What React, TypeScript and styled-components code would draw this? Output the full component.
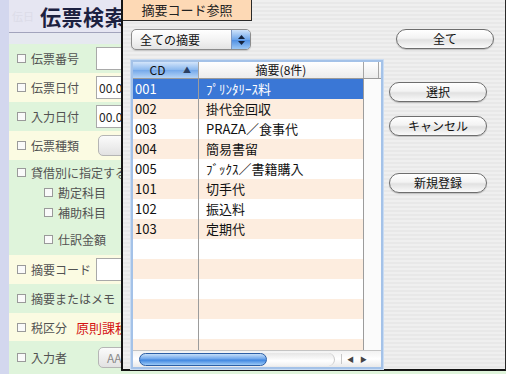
import React, { FC } from 'react';
import styled, { createGlobalStyle } from 'styled-components';

const jp = `"Noto Sans CJK JP", "Noto Sans", sans-serif`;

const GlobalStyle = createGlobalStyle`
  html, body {
    margin: 0;
    padding: 0;
    background: #e8e8f2;
  }
  * {
    box-sizing: border-box;
  }
`;

const Desk = styled.div`
  position: relative;
  width: 506px;
  height: 374px;
  overflow: hidden;
  font-family: ${jp};
  background: #e8e8f2;
`;

/* ---------- search window behind ---------- */

const SearchWindow = styled.div`
  display: flex;
  flex-direction: column;
  height: 100%;
  border-left: 9px solid #d3d7ee;
`;

const TitleBar = styled.div`
  height: 33px;
  display: flex;
  align-items: center;
  padding-left: 3px;
  background: #e6e6f2;
  border-bottom: 1px solid #a2a4bc;
`;

const Ghost = styled.span`
  font-size: 11px;
  color: #dcdce8;
  margin-right: 6px;
  align-self: flex-start;
  margin-top: 8px;
`;

const Title = styled.h1`
  margin: 0;
  font-size: 21px;
  font-weight: 700;
  color: #1c2140;
  letter-spacing: 0.5px;
  white-space: nowrap;
`;

const Gap = styled.div`
  height: 11px;
  background: #e6e9f0;
`;

const Row = styled.div<{ $tone: 'green' | 'yellow'; $h: number }>`
  height: ${(p) => p.$h}px;
  display: flex;
  align-items: center;
  padding-left: 8px;
  background: ${(p) => (p.$tone === 'green' ? '#dff4db' : '#fbfbe2')};
  white-space: nowrap;
`;

const StackRow = styled(Row)`
  flex-direction: column;
  align-items: flex-start;
  padding-top: 2px;
`;

const Line = styled.div<{ $indent?: number; $top?: number }>`
  height: 20px;
  display: flex;
  align-items: center;
  padding-left: ${(p) => p.$indent ?? 0}px;
  margin-top: ${(p) => p.$top ?? 0}px;
`;

const Box = styled.span`
  width: 9px;
  height: 9px;
  border: 1px solid #9a9a9a;
  background: #fafafa;
  margin-right: 5px;
  flex: none;
`;

const Label = styled.span<{ $w?: number }>`
  font-size: 12px;
  color: #525252;
  width: ${(p) => (p.$w ? `${p.$w}px` : 'auto')};
`;

const Field = styled.div`
  width: 60px;
  height: 23px;
  background: #fff;
  border: 1px solid #a9a9a9;
  font-size: 12px;
  color: #222;
  padding-left: 2px;
  line-height: 21px;
`;

const GrayButton = styled.div`
  margin-left: 2px;
  width: 60px;
  height: 21px;
  border: 1px solid #b5b5b5;
  border-radius: 5px;
  background: linear-gradient(#fbfbfb, #e2e2e2);
  font-size: 12px;
  color: #8a8a8a;
  padding-left: 8px;
  line-height: 19px;
`;

const RedText = styled.span`
  font-size: 13px;
  color: #d41414;
`;

/* ---------- dialog ---------- */

const Dialog = styled.div`
  position: absolute;
  left: 121px;
  top: 0;
  width: 385px;
  height: 371px;
  border-left: 2px solid #141414;
  border-right: 1px solid #2a2a2a;
  border-bottom: 2px solid #141414;
  background: repeating-linear-gradient(#efefef 0 2px, #e8e8e8 2px 4px);
  display: flex;
  flex-direction: column;
`;

const Tab = styled.div`
  width: 129px;
  height: 21px;
  background: #fdd9b5;
  border-right: 1px solid #2a2a2a;
  border-bottom: 1px solid #2a2a2a;
  font-size: 13px;
  color: #222;
  text-align: center;
  line-height: 20px;
`;

const Controls = styled.div`
  display: flex;
  justify-content: space-between;
  align-items: flex-start;
  margin-top: 8px;
  padding: 0 11px 0 8px;
`;

const Popup = styled.div`
  width: 120px;
  height: 21px;
  border: 1px solid #8c8c8c;
  border-radius: 5px;
  background: linear-gradient(#ffffff, #f1f1f1 60%, #e4e4e4);
  display: flex;
  align-items: center;
  overflow: hidden;
  box-shadow: 0 1px 1px rgba(0, 0, 0, 0.15);
`;

const PopupText = styled.span`
  flex: 1;
  font-size: 12px;
  color: #111;
  padding-left: 8px;
`;

const Stepper = styled.span`
  width: 19px;
  height: 100%;
  border-left: 1px solid #7d98c4;
  background: linear-gradient(#cfe3fa, #6fa6ea 50%, #4b8ce2 51%, #9cc8f5);
  display: flex;
  flex-direction: column;
  align-items: center;
  justify-content: center;
  gap: 2px;
`;

const Pill = styled.button<{ $w?: number }>`
  width: ${(p) => p.$w ?? 98}px;
  height: 20px;
  padding: 0;
  border: 1px solid #6e6e6e;
  border-radius: 10px;
  background: linear-gradient(#ffffff, #f3f3f3 45%, #e1e1e1 55%, #fafafa);
  font-family: ${jp};
  font-size: 12px;
  color: #111;
  line-height: 18px;
  box-shadow: 0 1px 1px rgba(0, 0, 0, 0.2);
`;

const Rule = styled.div`
  height: 1px;
  margin: 5px 7px 0 5px;
  background: #a3a3a3;
`;

const Body = styled.div`
  display: flex;
  margin-top: 5px;
  padding-left: 8px;
`;

const ListFrame = styled.div`
  width: 252px;
  height: 309px;
  border: 2px solid #a4c2e8;
  outline: 1px solid #c9dbf1;
  display: flex;
  flex-direction: column;
  background: #fff;
  overflow: hidden;
`;

const HeadRow = styled.div`
  display: flex;
  height: 17px;
  border-bottom: 1px solid #9a9a9a;
  background: linear-gradient(#ffffff, #ececec);
  flex: none;
`;

const HeadCell = styled.div<{ $w: number; $active?: boolean }>`
  width: ${(p) => p.$w}px;
  flex: none;
  font-size: 12px;
  line-height: 16px;
  color: #111;
  text-align: center;
  padding-right: ${(p) => (p.$active ? 16 : 0)}px;
  border-right: 1px solid #a5a5a5;
  position: relative;
  background: ${(p) => (p.$active ? 'linear-gradient(#d2e4fa, #8bb8ee 50%, #74a8ea 51%, #b5d4f6)' : 'transparent')};
`;

const SortMark = styled.span`
  position: absolute;
  right: 7px;
  top: 0;
  font-size: 8px;
  color: #2a3f62;
`;

const Rows = styled.div`
  flex: 1;
  overflow: hidden;
`;

const ListRow = styled.div<{ $odd: boolean; $selected?: boolean }>`
  display: flex;
  height: 20px;
  background: ${(p) => (p.$selected ? '#3a77d6' : p.$odd ? '#fdeddf' : '#ffffff')};
  color: ${(p) => (p.$selected ? '#fff' : '#111')};
`;

const Cell = styled.div<{ $w: number; $pad: number }>`
  width: ${(p) => p.$w}px;
  flex: none;
  padding-left: ${(p) => p.$pad}px;
  font-size: 13px;
  line-height: 20px;
  border-right: 1px solid #9c9c9c;
  white-space: nowrap;
  overflow: hidden;
`;

const FillerCell = styled.div`
  flex: 1;
  background: #fbfbfb;
`;

const HScroll = styled.div`
  height: 17px;
  flex: none;
  display: flex;
  align-items: center;
  border-top: 1px solid #c4c4c4;
  background: linear-gradient(#f2f2f2, #ffffff 50%, #e9e9e9);
  padding-left: 6px;
`;

const Track = styled.div`
  width: 196px;
  height: 13px;
  border-radius: 7px;
  background: linear-gradient(#e6e6e6, #ffffff 60%, #f0f0f0);
  border-right: 1px solid #c8c8c8;
`;

const Thumb = styled.div`
  width: 128px;
  height: 13px;
  border-radius: 7px;
  border: 1px solid #2b5ea5;
  background: linear-gradient(#c4def9, #6da5eb 45%, #3f86e0 55%, #9ccaf7);
`;

const Arrows = styled.div`
  display: flex;
  gap: 6px;
  margin-left: 6px;
  font-size: 7px;
  color: #444;
  border-left: 1px solid #c8c8c8;
  padding-left: 5px;
`;

const SideButtons = styled.div`
  display: flex;
  flex-direction: column;
  margin-left: 6px;
  padding-top: 22px;
  gap: 14px;
`;

const Spacer = styled.div`
  height: 9px;
`;

const items: [string, string][] = [
  ['001', 'ﾌﾟﾘﾝﾀﾘｰｽ料'],
  ['002', '掛代金回収'],
  ['003', 'PRAZA／食事代'],
  ['004', '簡易書留'],
  ['005', 'ﾌﾞｯｸｽ／書籍購入'],
  ['101', '切手代'],
  ['102', '振込料'],
  ['103', '定期代'],
];

const rows = [...items, ...Array.from({ length: 6 }, () => ['', ''] as [string, string])];

const Arrow: FC<{ up?: boolean }> = ({ up }) => (
  <svg width="7" height="4" viewBox="0 0 7 4">
    <path d={up ? 'M0 4 L3.5 0 L7 4 Z' : 'M0 0 L3.5 4 L7 0 Z'} fill="#15233c" />
  </svg>
);

const App: FC = () => (
  <Desk>
    <GlobalStyle />
    <SearchWindow>
      <TitleBar>
        <Ghost>伝日</Ghost>
        <Title>伝票検索</Title>
      </TitleBar>
      <Gap />
      <Row $tone="green" $h={29}>
        <Box />
        <Label $w={65}>伝票番号</Label>
        <Field />
      </Row>
      <Row $tone="yellow" $h={29}>
        <Box />
        <Label $w={65}>伝票日付</Label>
        <Field>00.0</Field>
      </Row>
      <Row $tone="green" $h={29}>
        <Box />
        <Label $w={65}>入力日付</Label>
        <Field>00.0</Field>
      </Row>
      <Row $tone="yellow" $h={29}>
        <Box />
        <Label $w={65}>伝票種類</Label>
        <GrayButton />
      </Row>
      <StackRow $tone="green" $h={95}>
        <Line>
          <Box />
          <Label>貸借別に指定する</Label>
        </Line>
        <Line $indent={27}>
          <Box />
          <Label>勘定科目</Label>
        </Line>
        <Line $indent={27}>
          <Box />
          <Label>補助科目</Label>
        </Line>
        <Line $indent={27} $top={7}>
          <Box />
          <Label>仕訳金額</Label>
        </Line>
      </StackRow>
      <Row $tone="yellow" $h={29}>
        <Box />
        <Label $w={65}>摘要コード</Label>
        <Field />
      </Row>
      <Row $tone="green" $h={29}>
        <Box />
        <Label>摘要またはメモ</Label>
      </Row>
      <Row $tone="yellow" $h={28}>
        <Box />
        <Label $w={45}>税区分</Label>
        <RedText>原則課税</RedText>
      </Row>
      <Row $tone="green" $h={33}>
        <Box />
        <Label $w={65}>入力者</Label>
        <GrayButton>AA</GrayButton>
      </Row>
    </SearchWindow>

    <Dialog>
      <Tab>摘要コード参照</Tab>
      <Controls>
        <Popup>
          <PopupText>全ての摘要</PopupText>
          <Stepper>
            <Arrow up />
            <Arrow />
          </Stepper>
        </Popup>
        <Pill>全て</Pill>
      </Controls>
      <Rule />
      <Body>
        <ListFrame>
          <HeadRow>
            <HeadCell $w={66} $active>
              CD
              <SortMark>▲</SortMark>
            </HeadCell>
            <HeadCell $w={165}>摘要(8件)</HeadCell>
            <HeadCell $w={15} />
          </HeadRow>
          <Rows>
            {rows.map(([cd, text], i) => (
              <ListRow key={i} $odd={i % 2 === 1} $selected={i === 0}>
                <Cell $w={66} $pad={2}>
                  {cd}
                </Cell>
                <Cell $w={165} $pad={7}>
                  {text}
                </Cell>
                <FillerCell />
              </ListRow>
            ))}
          </Rows>
          <HScroll>
            <Track>
              <Thumb />
            </Track>
            <Arrows>
              <span>◀</span>
              <span>▶</span>
            </Arrows>
          </HScroll>
        </ListFrame>
        <SideButtons>
          <Pill>選択</Pill>
          <Pill>キャンセル</Pill>
          <Spacer />
          <Pill>新規登録</Pill>
        </SideButtons>
      </Body>
    </Dialog>
  </Desk>
);

export default App;
